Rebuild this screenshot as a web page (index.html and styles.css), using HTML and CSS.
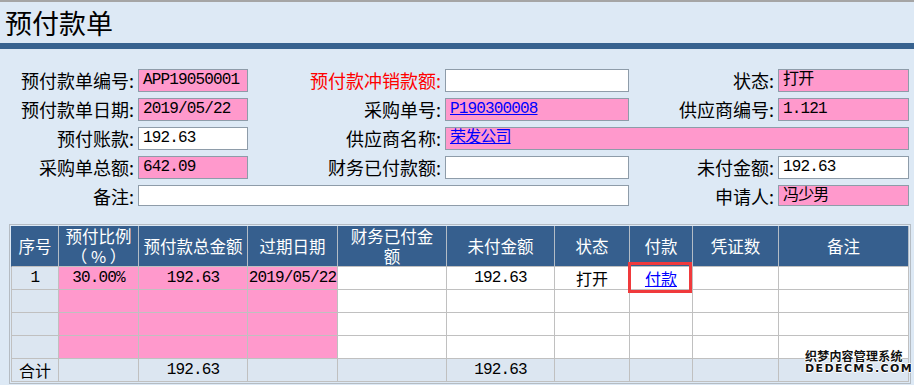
FILE: index.html
```html
<!DOCTYPE html>
<html lang="zh-CN">
<head>
    <meta charset="UTF-8">
    <meta name="viewport" content="width=device-width, initial-scale=1.0">
    <title>预付款单</title>
    <link rel="stylesheet" href="styles.css">
</head>
<body>
    <div class="titlebar">
        <h1>预付款单</h1>
    </div>

    <div class="form">
        <label>预付款单编号:</label>
        <div class="field pink">APP19050001</div>
        <label class="red">预付款冲销款额:</label>
        <div class="field"></div>
        <label>状态:</label>
        <div class="field pink">打开</div>

        <label>预付款单日期:</label>
        <div class="field pink">2019/05/22</div>
        <label>采购单号:</label>
        <div class="field pink"><a href="#">P190300008</a></div>
        <label>供应商编号:</label>
        <div class="field pink">1.121</div>

        <label>预付账款:</label>
        <div class="field">192.63</div>
        <label>供应商名称:</label>
        <div class="field pink wide"><a href="#">荣发公司</a></div>

        <label>采购单总额:</label>
        <div class="field pink">642.09</div>
        <label>财务已付款额:</label>
        <div class="field"></div>
        <label>未付金额:</label>
        <div class="field">192.63</div>

        <label>备注:</label>
        <div class="field note"></div>
        <label>申请人:</label>
        <div class="field pink">冯少男</div>
    </div>

    <div class="grid-wrap">
        <table class="grid">
            <colgroup>
                <col style="width:48px">
                <col style="width:80px">
                <col style="width:109px">
                <col style="width:90px">
                <col style="width:109px">
                <col style="width:108px">
                <col style="width:75px">
                <col style="width:63px">
                <col style="width:86px">
                <col style="width:130px">
            </colgroup>
            <thead>
                <tr>
                    <th>序号</th>
                    <th>预付比例<br>（ % ）</th>
                    <th>预付款总金额</th>
                    <th>过期日期</th>
                    <th>财务已付金<br>额</th>
                    <th>未付金额</th>
                    <th>状态</th>
                    <th>付款</th>
                    <th>凭证数</th>
                    <th>备注</th>
                </tr>
            </thead>
            <tbody>
                <tr>
                    <td class="idx">1</td>
                    <td class="pink">30.00%</td>
                    <td class="pink">192.63</td>
                    <td class="pink">2019/05/22</td>
                    <td></td>
                    <td>192.63</td>
                    <td class="cn">打开</td>
                    <td class="pay"><a href="#">付款</a><span class="mark"></span></td>
                    <td></td>
                    <td></td>
                </tr>
                <tr>
                    <td class="idx"></td>
                    <td class="pink"></td>
                    <td class="pink"></td>
                    <td class="pink"></td>
                    <td></td><td></td><td></td><td></td><td></td><td></td>
                </tr>
                <tr>
                    <td class="idx"></td>
                    <td class="pink"></td>
                    <td class="pink"></td>
                    <td class="pink"></td>
                    <td></td><td></td><td></td><td></td><td></td><td></td>
                </tr>
                <tr>
                    <td class="idx"></td>
                    <td class="pink"></td>
                    <td class="pink"></td>
                    <td class="pink"></td>
                    <td></td><td></td><td></td><td></td><td></td><td></td>
                </tr>
            </tbody>
            <tfoot>
                <tr>
                    <td class="cn">合计</td>
                    <td></td>
                    <td>192.63</td>
                    <td></td>
                    <td></td>
                    <td>192.63</td>
                    <td></td>
                    <td></td>
                    <td></td>
                    <td></td>
                </tr>
            </tfoot>
        </table>
    </div>

    <div class="watermark">
        <div class="wm-cn">织梦内容管理系统</div>
        <div class="wm-en">DEDECMS.COM</div>
    </div>
</body>
</html>
```

FILE: styles.css
```css
* {
    box-sizing: border-box;
}

body {
    margin: 0;
    background: #dde9f5;
    font-family: "Noto Sans CJK SC", sans-serif;
    color: #000;
}

a {
    color: #0000ff;
    text-decoration: underline;
}

/* title */
.titlebar {
    height: 49px;
    border-top: 2px solid #a5a5a5;
    border-bottom: 6px solid #37628f;
    padding-left: 5px;
}

.titlebar h1 {
    margin: 0;
    font-size: 27px;
    font-weight: normal;
    line-height: 41px;
}

/* header form */
.form {
    display: grid;
    grid-template-columns: 130px 110px 197px 184px 149px 131px;
    grid-template-rows: 23px 23px 23px 23px 21px;
    row-gap: 6px;
    margin: 20px 0 0 8px;
}

.form label {
    text-align: right;
    padding-right: 4px;
    font-size: 18px;
    line-height: 23px;
    white-space: nowrap;
}

.form label.red {
    color: #ff0000;
}

.field {
    border: 1px solid #8e9ca9;
    background: #fff;
    padding: 0 4px;
    font-family: "Liberation Mono", "Noto Sans CJK SC", monospace;
    font-size: 16px;
    letter-spacing: -0.85px;
    line-height: 21px;
    white-space: nowrap;
    overflow: hidden;
}

.field.pink {
    background: #ff99cc;
}

.field.wide {
    grid-column: 4 / 7;
}

.field.note {
    grid-column: 2 / 5;
    line-height: 19px;
}

/* detail table */
.grid-wrap {
    width: 902px;
    margin: 18px 0 0 9px;
    border: 1px solid #b5bcc3;
    padding: 1px;
}

.grid {
    width: 898px;
    border-collapse: separate;
    border-spacing: 0;
    table-layout: fixed;
}

.grid th,
.grid td {
    padding: 0;
    text-align: center;
    white-space: nowrap;
    border-right: 1px solid #c0c0c0;
    border-bottom: 1px solid #c0c0c0;
}

.grid th:first-child,
.grid td:first-child {
    border-left: 1px solid #c0c0c0;
}

.grid th {
    height: 41px;
    background: #365f8e;
    border-right-color: #b3bcc6;
    color: #fff;
    font-weight: normal;
    font-size: 16.5px;
    line-height: 20px;
}

.grid th:first-child {
    border-left-color: #365f8e;
}

.grid td {
    height: 23px;
    background: #fff;
    font-family: "Liberation Mono", "Noto Sans CJK SC", monospace;
    font-size: 16px;
    letter-spacing: -0.85px;
    line-height: 18px;
}

.grid td.cn,
.grid td.pay {
    font-family: "Noto Sans CJK SC", sans-serif;
    letter-spacing: 0;
}

.grid td.idx {
    background: #dce6f1;
}

.grid td.pink {
    background: #ff99cc;
}

.grid tfoot td {
    background: #dce6f1;
}

.grid td.pay {
    position: relative;
}

.mark {
    position: absolute;
    left: -2px;
    top: -5px;
    width: 64px;
    height: 31px;
    border: 3px solid #f03a3c;
}

/* site watermark */
.watermark {
    position: absolute;
    left: 805px;
    top: 349px;
    color: #111;
    font-weight: bold;
    text-shadow: 1px 0 0 #fff, -1px 0 0 #fff, 0 1px 0 #fff, 0 -1px 0 #fff;
}

.wm-cn {
    font-size: 12px;
    line-height: 14px;
    letter-spacing: 0.2px;
}

.wm-en {
    font-family: "DejaVu Sans", sans-serif;
    font-size: 11px;
    line-height: 12px;
    letter-spacing: 1.4px;
}
```
